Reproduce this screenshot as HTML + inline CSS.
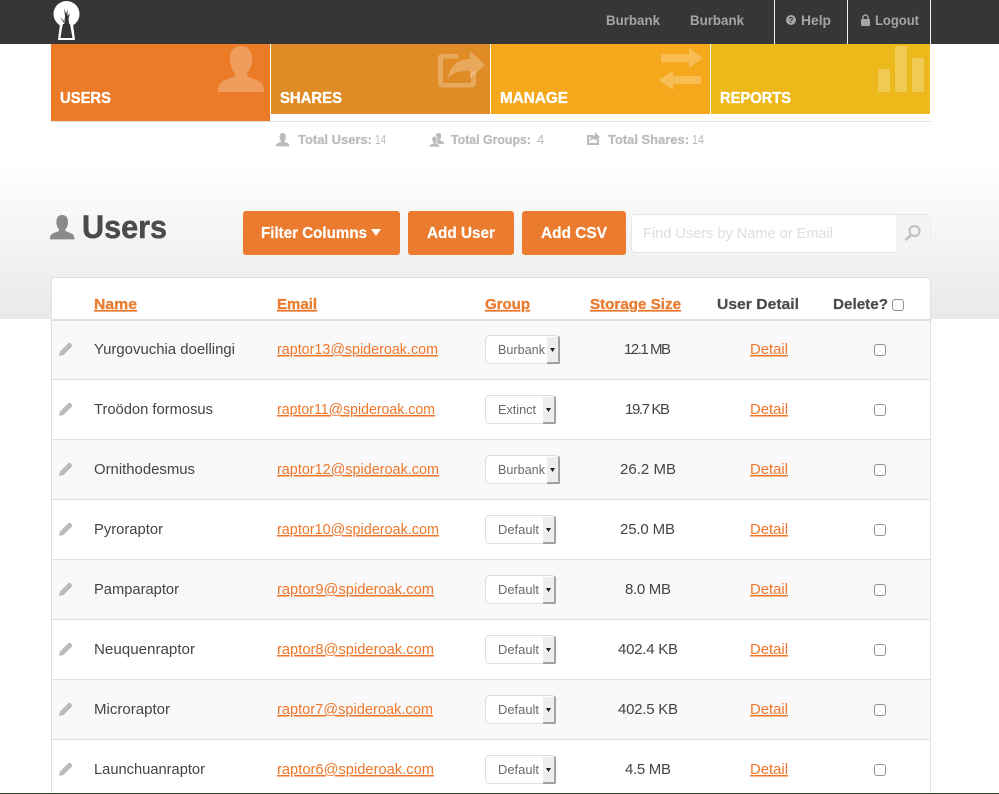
<!DOCTYPE html>
<html><head><meta charset="utf-8"><title>Users</title>
<style>
html,body{margin:0;padding:0;background:#fff;width:999px;height:794px;overflow:hidden}
svg{display:block;position:absolute;left:0;top:0}
text{font-family:"Liberation Sans",sans-serif}
.nav{font-size:14px;font-weight:700;fill:#a5a5a5}
.tile{font-size:16px;font-weight:700;fill:#fff;stroke:#fff;stroke-width:.35px}
.tot{font-size:13px;font-weight:700;fill:#bbb;stroke:#bbb;stroke-width:.25px}
.totn{font-size:13px;fill:#bbb}
.btn{font-size:16px;font-weight:700;fill:#fff;stroke:#fff;stroke-width:.2px}
.th{font-size:15px;font-weight:700;fill:#eb7b2e;stroke:#eb7b2e;stroke-width:.3px}
.thd{font-size:15px;font-weight:700;fill:#4b4b4d;stroke:#4b4b4d;stroke-width:.2px}
.n{font-size:15px;fill:#444}
.e{font-size:15px;fill:#f0762a}
.s{font-size:13px;fill:#6a6a6a}
.cb{fill:#fff;stroke:#939393}
.sb{fill:none;stroke:#8a8a8a;stroke-width:1.500px}
</style></head><body>
<svg width="999" height="794" viewBox="0 0 999 794" xmlns="http://www.w3.org/2000/svg">
<defs>
<linearGradient id="g" x1="0" y1="0" x2="0" y2="1"><stop offset="0" stop-color="#fff"/><stop offset="1" stop-color="#e9e9e9"/></linearGradient>
<path id="person" d="M23 0C15 0 12 6 12 13C12 20 15 25 17 27V30C14 33 0 33 0 44V46H46V44C46 33 32 33 29 30V27C31 25 34 20 34 13C34 6 31 0 23 0Z"/>
<path id="pen" d="M1 14L2 9.500L10 1.500C11 .6 12 .6 12.800 1.400L13.600 2.200C14.400 3 14.400 4 13.500 5L5.500 13Z"/>
<path id="caret" d="M0 0H5L2.500 4Z"/>
</defs>
<rect x="0" y="160" width="999" height="159" fill="url(#g)"/>

<!-- top nav -->
<rect width="999" height="44" fill="#363636"/>
<circle cx="66.500" cy="14" r="13" fill="#fff"/>
<path d="M60 24H73L75 40H58Z" fill="#fff"/>
<path d="M63 24H70L72.500 38H60.500L62 28Z" fill="#363636"/>
<path d="M64 26L65 16L64 8L66 14L67.500 9L67.500 16L70 13L68.500 19L69.500 26Z" fill="#363636"/>
<path d="M60 17L64 21L64 23Z" fill="#363636"/>
<text class="nav" x="606" y="25" textLength="54" lengthAdjust="spacingAndGlyphs">Burbank</text>
<text class="nav" x="690" y="25" textLength="54" lengthAdjust="spacingAndGlyphs">Burbank</text>
<rect x="774" width="1" height="44" fill="#eee"/><rect x="847" width="1" height="44" fill="#eee"/><rect x="930" width="1" height="44" fill="#eee"/>
<circle cx="791" cy="20" r="5" fill="#a5a5a5"/>
<text x="788.500" y="23" font-size="8" font-weight="700" fill="#363636">?</text>
<text class="nav" x="801" y="25" textLength="30" lengthAdjust="spacingAndGlyphs">Help</text>
<rect x="861" y="19" width="9" height="7" rx="1" fill="#a5a5a5"/>
<path d="M863 19V17.500a2.500 2.500 0 0 1 5 0V19" fill="none" stroke="#a5a5a5" stroke-width="1.400"/>
<text class="nav" x="875" y="25" textLength="44" lengthAdjust="spacingAndGlyphs">Logout</text>

<!-- tiles -->
<rect x="51" y="44" width="219" height="77" fill="#eb7b27"/>
<rect x="271" y="44" width="219" height="70" fill="#e08c26"/>
<rect x="491" y="44" width="219" height="70" fill="#f6a81d"/>
<rect x="711" y="44" width="219" height="70" fill="#edb91a"/>
<rect x="51" y="121" width="880" height="1" fill="#e2e2e2"/>
<text class="tile" x="60" y="103" textLength="51" lengthAdjust="spacingAndGlyphs">USERS</text>
<text class="tile" x="280" y="103" textLength="62" lengthAdjust="spacingAndGlyphs">SHARES</text>
<text class="tile" x="500" y="103" textLength="68" lengthAdjust="spacingAndGlyphs">MANAGE</text>
<text class="tile" x="720" y="103" textLength="71" lengthAdjust="spacingAndGlyphs">REPORTS</text>
<use href="#person" x="218" y="46" fill="#fff" fill-opacity=".25"/>
<g fill="#fff" fill-opacity=".25">
<path d="M442 54H458V58.500H445Q443 58.500 443 60.500V81Q443 83 445 83H469Q471 83 471 81V74L476 70V83Q476 87.500 471 87.500H443Q438 87.500 438 83V58Q438 54 442 54Z"/>
<path d="M470 51L485 65L470 78V71C460 71 453 72 448 79C449 67 457 59 470 59Z"/>
<path d="M661 54H689V48L703 58L689 68V62H661Z"/>
<path d="M701 76H673V71L659 80L673 90V84H701Z"/>
<rect x="878" y="69" width="12" height="23"/><rect x="895" y="46" width="12" height="46"/><rect x="912" y="58" width="12" height="34"/>
</g>

<!-- totals -->
<use href="#person" transform="translate(276 133) scale(.29)" fill="#bbb"/>
<text class="tot" x="298" y="144" textLength="74" lengthAdjust="spacingAndGlyphs">Total Users:</text>
<text class="totn" x="375" y="144" textLength="11" lengthAdjust="spacingAndGlyphs">14</text>
<use href="#person" transform="translate(433 133) scale(.24)" fill="#bbb"/>
<use href="#person" transform="translate(429 136) scale(.24)" fill="#bbb" stroke="#fff" stroke-width="3"/>
<text class="tot" x="451" y="144" textLength="80" lengthAdjust="spacingAndGlyphs">Total Groups:</text>
<text class="totn" x="537" y="144">4</text>
<path d="M587 135H593V137H589V143H597V140L599 138V145H587Z" fill="#bbb"/>
<path d="M595 132L600 137L595 141V139C592 139 590 140 589 142C590 138 592 136 595 135Z" fill="#bbb"/>
<text class="tot" x="608" y="144" textLength="81" lengthAdjust="spacingAndGlyphs">Total Shares:</text>
<text class="totn" x="692" y="144" textLength="12" lengthAdjust="spacingAndGlyphs">14</text>

<!-- heading -->
<use href="#person" transform="translate(50 215) scale(.53)" fill="#8a8a8a"/>
<text x="82" y="238" font-size="32" font-weight="700" fill="#4b4b4d" stroke="#4b4b4d" stroke-width=".5" textLength="85" lengthAdjust="spacingAndGlyphs">Users</text>

<!-- buttons -->
<rect x="243" y="211" width="157" height="44" rx="3" fill="#eb7b2e"/>
<rect x="408" y="211" width="106" height="44" rx="3" fill="#eb7b2e"/>
<rect x="522" y="211" width="104" height="44" rx="3" fill="#eb7b2e"/>
<text class="btn" x="261" y="238" textLength="106" lengthAdjust="spacingAndGlyphs">Filter Columns</text>
<path d="M371 229H381L376 236Z" fill="#fff"/>
<text class="btn" x="427" y="238" textLength="68" lengthAdjust="spacingAndGlyphs">Add User</text>
<text class="btn" x="541" y="238" textLength="66" lengthAdjust="spacingAndGlyphs">Add CSV</text>

<!-- search -->
<rect x="631.500" y="214.500" width="299" height="38" rx="4" fill="#fff" stroke="#e6e6e6"/>
<path d="M896 215H927Q930.500 215 930.500 218V253H896Z" fill="#f4f4f4"/>
<text x="643" y="238" font-size="15" fill="#dedede" textLength="190" lengthAdjust="spacingAndGlyphs">Find Users by Name or Email</text>
<circle cx="914.500" cy="231" r="5" fill="none" stroke="#c4c4c4" stroke-width="2.200"/>
<path d="M911 235L905.500 240" stroke="#c4c4c4" stroke-width="3" fill="none"/>

<!-- table -->
<rect x="51.500" y="277.500" width="879" height="530" rx="3" fill="#fff" stroke="#e0e0e0"/>
<rect x="52" y="321" width="878" height="58" fill="#f9f9f9"/>
<rect x="52" y="440" width="878" height="59" fill="#f9f9f9"/>
<rect x="52" y="560" width="878" height="59" fill="#f9f9f9"/>
<rect x="52" y="680" width="878" height="59" fill="#f9f9f9"/>
<rect x="52" y="319" width="878" height="2" fill="#e0e0e0"/>
<rect x="52" y="379" width="878" height="1" fill="#e0e0e0"/>
<rect x="52" y="439" width="878" height="1" fill="#e0e0e0"/>
<rect x="52" y="499" width="878" height="1" fill="#e0e0e0"/>
<rect x="52" y="559" width="878" height="1" fill="#e0e0e0"/>
<rect x="52" y="619" width="878" height="1" fill="#e0e0e0"/>
<rect x="52" y="679" width="878" height="1" fill="#e0e0e0"/>
<rect x="52" y="739" width="878" height="1" fill="#e0e0e0"/>

<text class="th" x="94" y="309" textLength="43" lengthAdjust="spacingAndGlyphs" text-decoration="underline">Name</text>
<text class="th" x="277" y="309" textLength="40" lengthAdjust="spacingAndGlyphs" text-decoration="underline">Email</text>
<text class="th" x="485" y="309" textLength="45" lengthAdjust="spacingAndGlyphs" text-decoration="underline">Group</text>
<text class="th" x="590" y="309" textLength="91" lengthAdjust="spacingAndGlyphs" text-decoration="underline">Storage Size</text>
<text class="thd" x="717" y="309" textLength="82" lengthAdjust="spacingAndGlyphs">User Detail</text>
<text class="thd" x="833" y="309" textLength="55" lengthAdjust="spacingAndGlyphs">Delete?</text>
<rect class="cb" x="892.500" y="299.500" width="11" height="11" rx="2.500"/>

<!-- row 1 -->
<use href="#pen" x="58" y="342" fill="#bbb"/>
<text class="n" x="94" y="354" textLength="141" lengthAdjust="spacingAndGlyphs">Yurgovuchia doellingi</text>
<text class="e" x="277" y="354" textLength="161" lengthAdjust="spacingAndGlyphs" text-decoration="underline">raptor13@spideroak.com</text>
<rect x="485.500" y="335.500" width="74" height="28" rx="4" fill="#fff" stroke="#ddd"/>
<rect x="547" y="337" width="11" height="25" fill="#eee"/><path class="sb" d="M559 336.500V363H547"/>
<text class="s" x="498" y="354" textLength="47" lengthAdjust="spacingAndGlyphs">Burbank</text>
<use href="#caret" x="550" y="348" fill="#222"/>
<text class="n" x="624" y="354" textLength="47">12.1 MB</text>
<text class="e" x="750" y="354" textLength="38" lengthAdjust="spacingAndGlyphs" text-decoration="underline">Detail</text>
<rect class="cb" x="874.500" y="344.500" width="11" height="11" rx="2.500"/>

<!-- row 2 -->
<use href="#pen" x="58" y="402" fill="#bbb"/>
<text class="n" x="94" y="414" textLength="119" lengthAdjust="spacingAndGlyphs">Troödon formosus</text>
<text class="e" x="277" y="414" textLength="158" lengthAdjust="spacingAndGlyphs" text-decoration="underline">raptor11@spideroak.com</text>
<rect x="485.500" y="395.500" width="70" height="28" rx="4" fill="#fff" stroke="#ddd"/>
<rect x="543" y="397" width="11" height="25" fill="#eee"/><path class="sb" d="M555 396.500V423H543"/>
<text class="s" x="498" y="414" textLength="38" lengthAdjust="spacingAndGlyphs">Extinct</text>
<use href="#caret" x="546" y="408" fill="#222"/>
<text class="n" x="625" y="414" textLength="45">19.7 KB</text>
<text class="e" x="750" y="414" textLength="38" lengthAdjust="spacingAndGlyphs" text-decoration="underline">Detail</text>
<rect class="cb" x="874.500" y="404.500" width="11" height="11" rx="2.500"/>

<!-- row 3 -->
<use href="#pen" x="58" y="462" fill="#bbb"/>
<text class="n" x="94" y="474" textLength="101" lengthAdjust="spacingAndGlyphs">Ornithodesmus</text>
<text class="e" x="277" y="474" textLength="162" lengthAdjust="spacingAndGlyphs" text-decoration="underline">raptor12@spideroak.com</text>
<rect x="485.500" y="455.500" width="74" height="28" rx="4" fill="#fff" stroke="#ddd"/>
<rect x="547" y="457" width="11" height="25" fill="#eee"/><path class="sb" d="M559 456.500V483H547"/>
<text class="s" x="498" y="474" textLength="47" lengthAdjust="spacingAndGlyphs">Burbank</text>
<use href="#caret" x="550" y="468" fill="#222"/>
<text class="n" x="620" y="474" textLength="56">26.2 MB</text>
<text class="e" x="750" y="474" textLength="38" lengthAdjust="spacingAndGlyphs" text-decoration="underline">Detail</text>
<rect class="cb" x="874.500" y="464.500" width="11" height="11" rx="2.500"/>

<!-- row 4 -->
<use href="#pen" x="58" y="522" fill="#bbb"/>
<text class="n" x="94" y="534" textLength="69" lengthAdjust="spacingAndGlyphs">Pyroraptor</text>
<text class="e" x="277" y="534" textLength="162" lengthAdjust="spacingAndGlyphs" text-decoration="underline">raptor10@spideroak.com</text>
<rect x="485.500" y="515.500" width="70" height="28" rx="4" fill="#fff" stroke="#ddd"/>
<rect x="543" y="517" width="11" height="25" fill="#eee"/><path class="sb" d="M555 516.500V543H543"/>
<text class="s" x="498" y="534" textLength="41" lengthAdjust="spacingAndGlyphs">Default</text>
<use href="#caret" x="546" y="528" fill="#222"/>
<text class="n" x="620" y="534" textLength="55">25.0 MB</text>
<text class="e" x="750" y="534" textLength="38" lengthAdjust="spacingAndGlyphs" text-decoration="underline">Detail</text>
<rect class="cb" x="874.500" y="524.500" width="11" height="11" rx="2.500"/>

<!-- row 5 -->
<use href="#pen" x="58" y="582" fill="#bbb"/>
<text class="n" x="94" y="594" textLength="85" lengthAdjust="spacingAndGlyphs">Pamparaptor</text>
<text class="e" x="277" y="594" textLength="157" lengthAdjust="spacingAndGlyphs" text-decoration="underline">raptor9@spideroak.com</text>
<rect x="485.500" y="575.500" width="70" height="28" rx="4" fill="#fff" stroke="#ddd"/>
<rect x="543" y="577" width="11" height="25" fill="#eee"/><path class="sb" d="M555 576.500V603H543"/>
<text class="s" x="498" y="594" textLength="41" lengthAdjust="spacingAndGlyphs">Default</text>
<use href="#caret" x="546" y="588" fill="#222"/>
<text class="n" x="625" y="594" textLength="46">8.0 MB</text>
<text class="e" x="750" y="594" textLength="38" lengthAdjust="spacingAndGlyphs" text-decoration="underline">Detail</text>
<rect class="cb" x="874.500" y="584.500" width="11" height="11" rx="2.500"/>

<!-- row 6 -->
<use href="#pen" x="58" y="642" fill="#bbb"/>
<text class="n" x="94" y="654" textLength="101" lengthAdjust="spacingAndGlyphs">Neuquenraptor</text>
<text class="e" x="277" y="654" textLength="157" lengthAdjust="spacingAndGlyphs" text-decoration="underline">raptor8@spideroak.com</text>
<rect x="485.500" y="635.500" width="70" height="28" rx="4" fill="#fff" stroke="#ddd"/>
<rect x="543" y="637" width="11" height="25" fill="#eee"/><path class="sb" d="M555 636.500V663H543"/>
<text class="s" x="498" y="654" textLength="41" lengthAdjust="spacingAndGlyphs">Default</text>
<use href="#caret" x="546" y="648" fill="#222"/>
<text class="n" x="618" y="654" textLength="60">402.4 KB</text>
<text class="e" x="750" y="654" textLength="38" lengthAdjust="spacingAndGlyphs" text-decoration="underline">Detail</text>
<rect class="cb" x="874.500" y="644.500" width="11" height="11" rx="2.500"/>

<!-- row 7 -->
<use href="#pen" x="58" y="702" fill="#bbb"/>
<text class="n" x="94" y="714" textLength="76" lengthAdjust="spacingAndGlyphs">Microraptor</text>
<text class="e" x="277" y="714" textLength="156" lengthAdjust="spacingAndGlyphs" text-decoration="underline">raptor7@spideroak.com</text>
<rect x="485.500" y="695.500" width="70" height="28" rx="4" fill="#fff" stroke="#ddd"/>
<rect x="543" y="697" width="11" height="25" fill="#eee"/><path class="sb" d="M555 696.500V723H543"/>
<text class="s" x="498" y="714" textLength="41" lengthAdjust="spacingAndGlyphs">Default</text>
<use href="#caret" x="546" y="708" fill="#222"/>
<text class="n" x="618" y="714" textLength="60">402.5 KB</text>
<text class="e" x="750" y="714" textLength="38" lengthAdjust="spacingAndGlyphs" text-decoration="underline">Detail</text>
<rect class="cb" x="874.500" y="704.500" width="11" height="11" rx="2.500"/>

<!-- row 8 -->
<use href="#pen" x="58" y="762" fill="#bbb"/>
<text class="n" x="94" y="774" textLength="111" lengthAdjust="spacingAndGlyphs">Launchuanraptor</text>
<text class="e" x="277" y="774" textLength="157" lengthAdjust="spacingAndGlyphs" text-decoration="underline">raptor6@spideroak.com</text>
<rect x="485.500" y="755.500" width="70" height="28" rx="4" fill="#fff" stroke="#ddd"/>
<rect x="543" y="757" width="11" height="25" fill="#eee"/><path class="sb" d="M555 756.500V783H543"/>
<text class="s" x="498" y="774" textLength="41" lengthAdjust="spacingAndGlyphs">Default</text>
<use href="#caret" x="546" y="768" fill="#222"/>
<text class="n" x="625" y="774" textLength="46">4.5 MB</text>
<text class="e" x="750" y="774" textLength="38" lengthAdjust="spacingAndGlyphs" text-decoration="underline">Detail</text>
<rect class="cb" x="874.500" y="764.500" width="11" height="11" rx="2.500"/>

<rect x="0" y="793" width="999" height="1" fill="#2c4a34"/>
</svg>
</body></html>
